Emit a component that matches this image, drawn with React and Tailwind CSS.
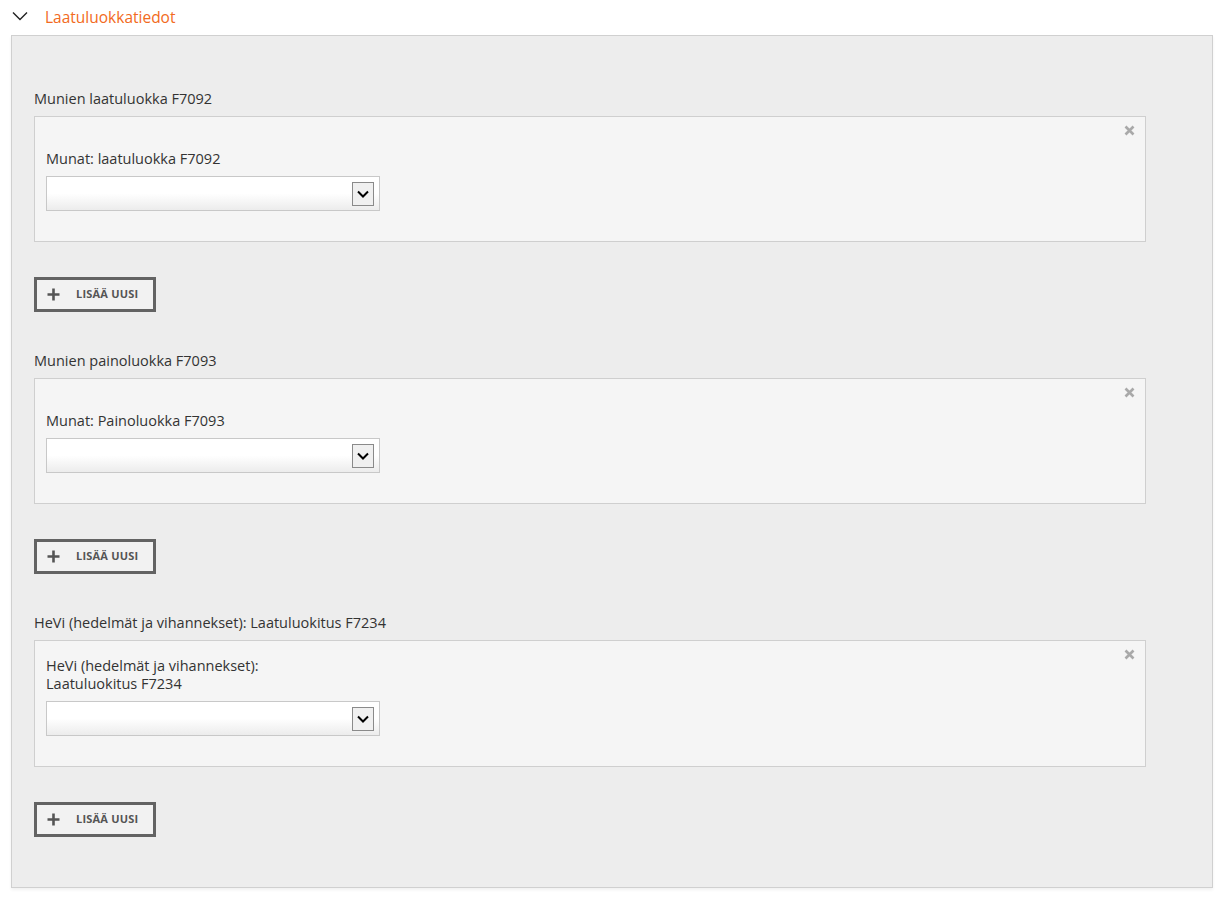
import React from "react";

const sections = [
  { title: "Munien laatuluokka F7092", label: ["Munat: laatuluokka F7092"] },
  { title: "Munien painoluokka F7093", label: ["Munat: Painoluokka F7093"] },
  {
    title: "HeVi (hedelmät ja vihannekset): Laatuluokitus F7234",
    label: ["HeVi (hedelmät ja vihannekset):", "Laatuluokitus F7234"],
  },
];

const SelectBox = () => (
  <div className="relative w-[334px] h-[35px] border border-[#c8c8c8] bg-gradient-to-b from-white via-white to-[#ececec]">
    <div className="absolute right-[5px] top-[5px] w-[22px] h-[24px] border border-[#8a8a8a] bg-[#f0f0f0] flex items-center justify-center">
      <svg width="12" height="8" viewBox="0 0 12 8">
        <path d="M1 1.5 L6 6.5 L11 1.5" fill="none" stroke="#000" strokeWidth="2" />
      </svg>
    </div>
  </div>
);

const Section = ({ title, label }) => (
  <div className="flex flex-col">
    <div className="text-[14.5px] leading-[18px] text-[#333] mb-2">{title}</div>

    {/* item box */}
    <div className="relative w-[1112px] border border-[#cfcfcf] bg-[#f5f5f5] pl-[11px] pt-[16px] pb-[30px]">
      <svg width="11" height="11" viewBox="0 0 11 11" className="absolute right-[10px] top-[8px]">
        <path d="M1.5 1.5 L9.5 9.5 M9.5 1.5 L1.5 9.5" stroke="#a9a9a9" strokeWidth="2.6" />
      </svg>
      <div className="min-h-[35px] flex flex-col justify-end mb-2 text-[14.5px] leading-[18px] text-[#333]">
        {label.map((l) => (
          <div key={l}>{l}</div>
        ))}
      </div>
      <SelectBox />
    </div>

    {/* add button */}
    <button className="mt-[35px] self-start w-[122px] h-[35px] border-[3px] border-[#636363] bg-[#f2f2f2] flex items-center pl-[10px]">
      <svg width="13" height="13" viewBox="0 0 13 13">
        <path d="M6.5 0.5 V12.5 M0.5 6.5 H12.5" stroke="#555" strokeWidth="2.6" />
      </svg>
      <span className="ml-[16px] text-[11px] font-bold tracking-[0.2px] text-[#555]">LISÄÄ UUSI</span>
    </button>
  </div>
);

export default function App() {
  return (
    <div className="w-[1228px] h-[901px] bg-white font-['Open_Sans','Liberation_Sans',sans-serif]">
      {/* header */}
      <div className="flex items-center h-[35px] pl-[12px]">
        <svg width="16" height="10" viewBox="0 0 16 10" className="mt-[-4px]">
          <path d="M1 1.5 L8 8.5 L15 1.5" fill="none" stroke="#222" strokeWidth="1.4" />
        </svg>
        <span className="ml-[17px] text-[15.5px] text-[#f26a21]">Laatuluokkatiedot</span>
      </div>

      {/* panel */}
      <div className="ml-[11px] w-[1202px] border border-[#d0d0d0] bg-[#ededed] shadow-[0_2px_3px_rgba(0,0,0,0.06)] pl-[22px] pt-[54px] pb-[50px] flex flex-col gap-[40px]">
        {sections.map((s) => (
          <Section key={s.title} {...s} />
        ))}
      </div>
    </div>
  );
}
